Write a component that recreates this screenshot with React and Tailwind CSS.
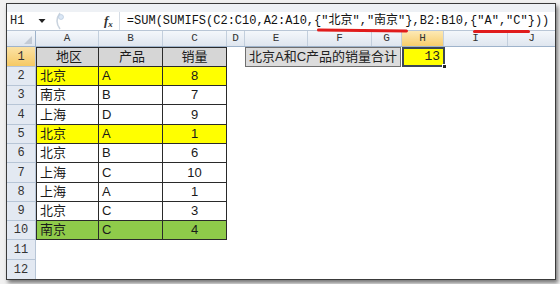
import React from 'react';

const cols = [
  { key: 'A', w: 'w-[63px]' },
  { key: 'B', w: 'w-[64px]' },
  { key: 'C', w: 'w-[64px]' },
  { key: 'D', w: 'w-[18px]' },
  { key: 'E', w: 'w-[63px]' },
  { key: 'F', w: 'w-[64px]' },
  { key: 'G', w: 'w-[30px]' },
  { key: 'H', w: 'w-[42px]' },
  { key: 'I', w: 'w-[64px]' },
  { key: 'J', w: 'w-[48px]' },
];

const rows = [
  { n: 1, h: 'h-[20px]', a: '地区', b: '产品', c: '销量', bg: 'bg-[#d6d6d6]', head: true },
  { n: 2, h: 'h-[19px]', a: '北京', b: 'A', c: '8', bg: 'bg-[#ffff00]' },
  { n: 3, h: 'h-[19px]', a: '南京', b: 'B', c: '7', bg: 'bg-white' },
  { n: 4, h: 'h-[20px]', a: '上海', b: 'D', c: '9', bg: 'bg-white' },
  { n: 5, h: 'h-[19px]', a: '北京', b: 'A', c: '1', bg: 'bg-[#ffff00]' },
  { n: 6, h: 'h-[19px]', a: '北京', b: 'B', c: '6', bg: 'bg-white' },
  { n: 7, h: 'h-[20px]', a: '上海', b: 'C', c: '10', bg: 'bg-white' },
  { n: 8, h: 'h-[19px]', a: '上海', b: 'A', c: '1', bg: 'bg-white' },
  { n: 9, h: 'h-[19px]', a: '北京', b: 'C', c: '3', bg: 'bg-white' },
  { n: 10, h: 'h-[19px]', a: '南京', b: 'C', c: '4', bg: 'bg-[#8fcb4a]' },
  { n: 11, h: 'h-[20px]' },
  { n: 12, h: 'h-[20px]' },
];

const sans = "font-['Liberation_Sans','Noto_Sans_CJK_SC',sans-serif]";
const mono = "font-['Liberation_Mono','Noto_Sans_CJK_SC',monospace]";

const formula = '=SUM(SUMIFS(C2:C10,A2:A10,{"北京","南京"},B2:B10,{"A","C"}))';

const FormulaBar = () => (
  <div className="relative h-[27px] shrink-0 bg-[#eef1f5] pt-[8px] border-b border-[#b9c6d6]">
    <div className="flex h-[18px] items-center bg-white">
      {/* name box */}
      <div className={`w-[28px] pl-[3px] text-[12px] text-[#222] ${mono}`}>H1</div>
      <svg width="8" height="6" viewBox="0 0 8 6" className="ml-[3px]">
        <path d="M0.5 1 L7.5 1 L4 5 Z" fill="#222" />
      </svg>
      {/* grip */}
      <svg width="14" height="18" viewBox="0 0 14 18" className="ml-[5px]">
        <path d="M9 1 Q3 9 9 17" stroke="#c9d3de" strokeWidth="1.5" fill="none" />
        <circle cx="10" cy="5" r="2.5" fill="#dbe7f5" stroke="#b8c9dc" strokeWidth="0.7" />
      </svg>
      <div className="w-[39px]" />
      <span className="font-['Liberation_Serif',serif] italic font-bold text-[13px] text-[#333] leading-none">
        f<span className="text-[9px] align-[-2px]">x</span>
      </span>
      <div className="ml-[6px] h-full w-px bg-[#d5dce5]" />
      <div className={`ml-[7px] text-[12px] text-[#111] whitespace-nowrap ${mono}`}>{formula}</div>
    </div>
    {/* red hand-drawn underlines */}
    <div className="absolute left-[310px] top-[25px] h-[3px] w-[91px] rounded-full bg-[#e01c1c] rotate-[0.6deg]" />
    <div className="absolute left-[466px] top-[26px] h-[3px] w-[57px] rounded-full bg-[#e01c1c]" />
  </div>
);

const ColumnHeader = () => (
  <div className="flex h-[16px] shrink-0 border-b border-[#9eb3cb]">
    <div className="relative w-[29px] shrink-0 border-r border-[#9eb3cb] bg-gradient-to-b from-[#f4f7fb] to-[#dfe6ef]">
      <svg width="8" height="8" viewBox="0 0 8 8" className="absolute right-[3px] bottom-[2px]">
        <path d="M8 0 L8 8 L0 8 Z" fill="#c3cbd6" />
      </svg>
    </div>
    {cols.map((c) => (
      <div
        key={c.key}
        className={`${c.w} shrink-0 flex items-center justify-center border-r border-[#c3cfdd] text-[11px] text-[#333] ${mono} ${
          c.key === 'H'
            ? 'bg-gradient-to-b from-[#fde9b4] to-[#f7cd6a]'
            : 'bg-gradient-to-b from-[#f4f7fb] to-[#dfe6ef]'
        }`}
      >
        {c.key}
      </div>
    ))}
  </div>
);

const Row = ({ r }) => {
  const table = !!r.a;
  const cell = `${r.bg} border-r border-b border-[#2a2a2a] flex items-center text-[13px] text-[#1a1a1a] ${sans}`;
  return (
    <div className={`flex ${r.h} shrink-0`}>
      <div
        className={`w-[29px] shrink-0 flex items-center justify-center border-r border-b border-[#b7c5d6] text-[12px] text-[#333] ${mono} ${
          r.n === 1 ? 'bg-gradient-to-b from-[#fbe2a4] to-[#f5c963]' : 'bg-[#e3e9f2]'
        }`}
      >
        {r.n}
      </div>
      {table ? (
        <>
          <div className={`w-[63px] shrink-0 border-l pl-[3px] ${r.head ? 'justify-center border-t' : ''} ${cell}`}>{r.a}</div>
          <div className={`w-[64px] shrink-0 pl-[3px] ${r.head ? 'justify-center border-t' : ''} ${cell}`}>{r.b}</div>
          <div className={`w-[64px] shrink-0 justify-center ${r.head ? 'border-t' : ''} ${cell}`}>{r.c}</div>
        </>
      ) : (
        <div className="w-[192px] shrink-0" />
      )}
      <div className="w-[18px] shrink-0" />
      {r.n === 1 ? (
        <>
          <div
            className={`w-[156px] shrink-0 flex items-center pl-[3px] bg-[#dcdcdc] border border-[#6f6f6f] text-[13px] text-[#222] whitespace-nowrap ${sans}`}
          >
            北京A和C产品的销量合计
          </div>
          <div className="relative ml-[1px] w-[43px] shrink-0 flex items-center justify-end pr-[3px] bg-[#ffff00] border-2 border-[#3c4656]">
            <span className={`text-[13px] text-[#222] ${mono}`}>13</span>
            <div className="absolute -right-[4px] -bottom-[4px] h-[5px] w-[5px] bg-[#222] border border-white" />
          </div>
        </>
      ) : null}
    </div>
  );
};

export default function App() {
  return (
    <div className="w-[560px] h-[284px] overflow-hidden bg-[#f1f1f1] pt-[3px] pl-[6px]">
      <div className="w-[550px] h-[277px] flex flex-col overflow-hidden border border-[#3a3a3a] bg-white shadow-[2px_3px_4px_rgba(0,0,0,0.5)]">
        <FormulaBar />
        <ColumnHeader />
        {rows.map((r) => (
          <Row key={r.n} r={r} />
        ))}
      </div>
    </div>
  );
}
